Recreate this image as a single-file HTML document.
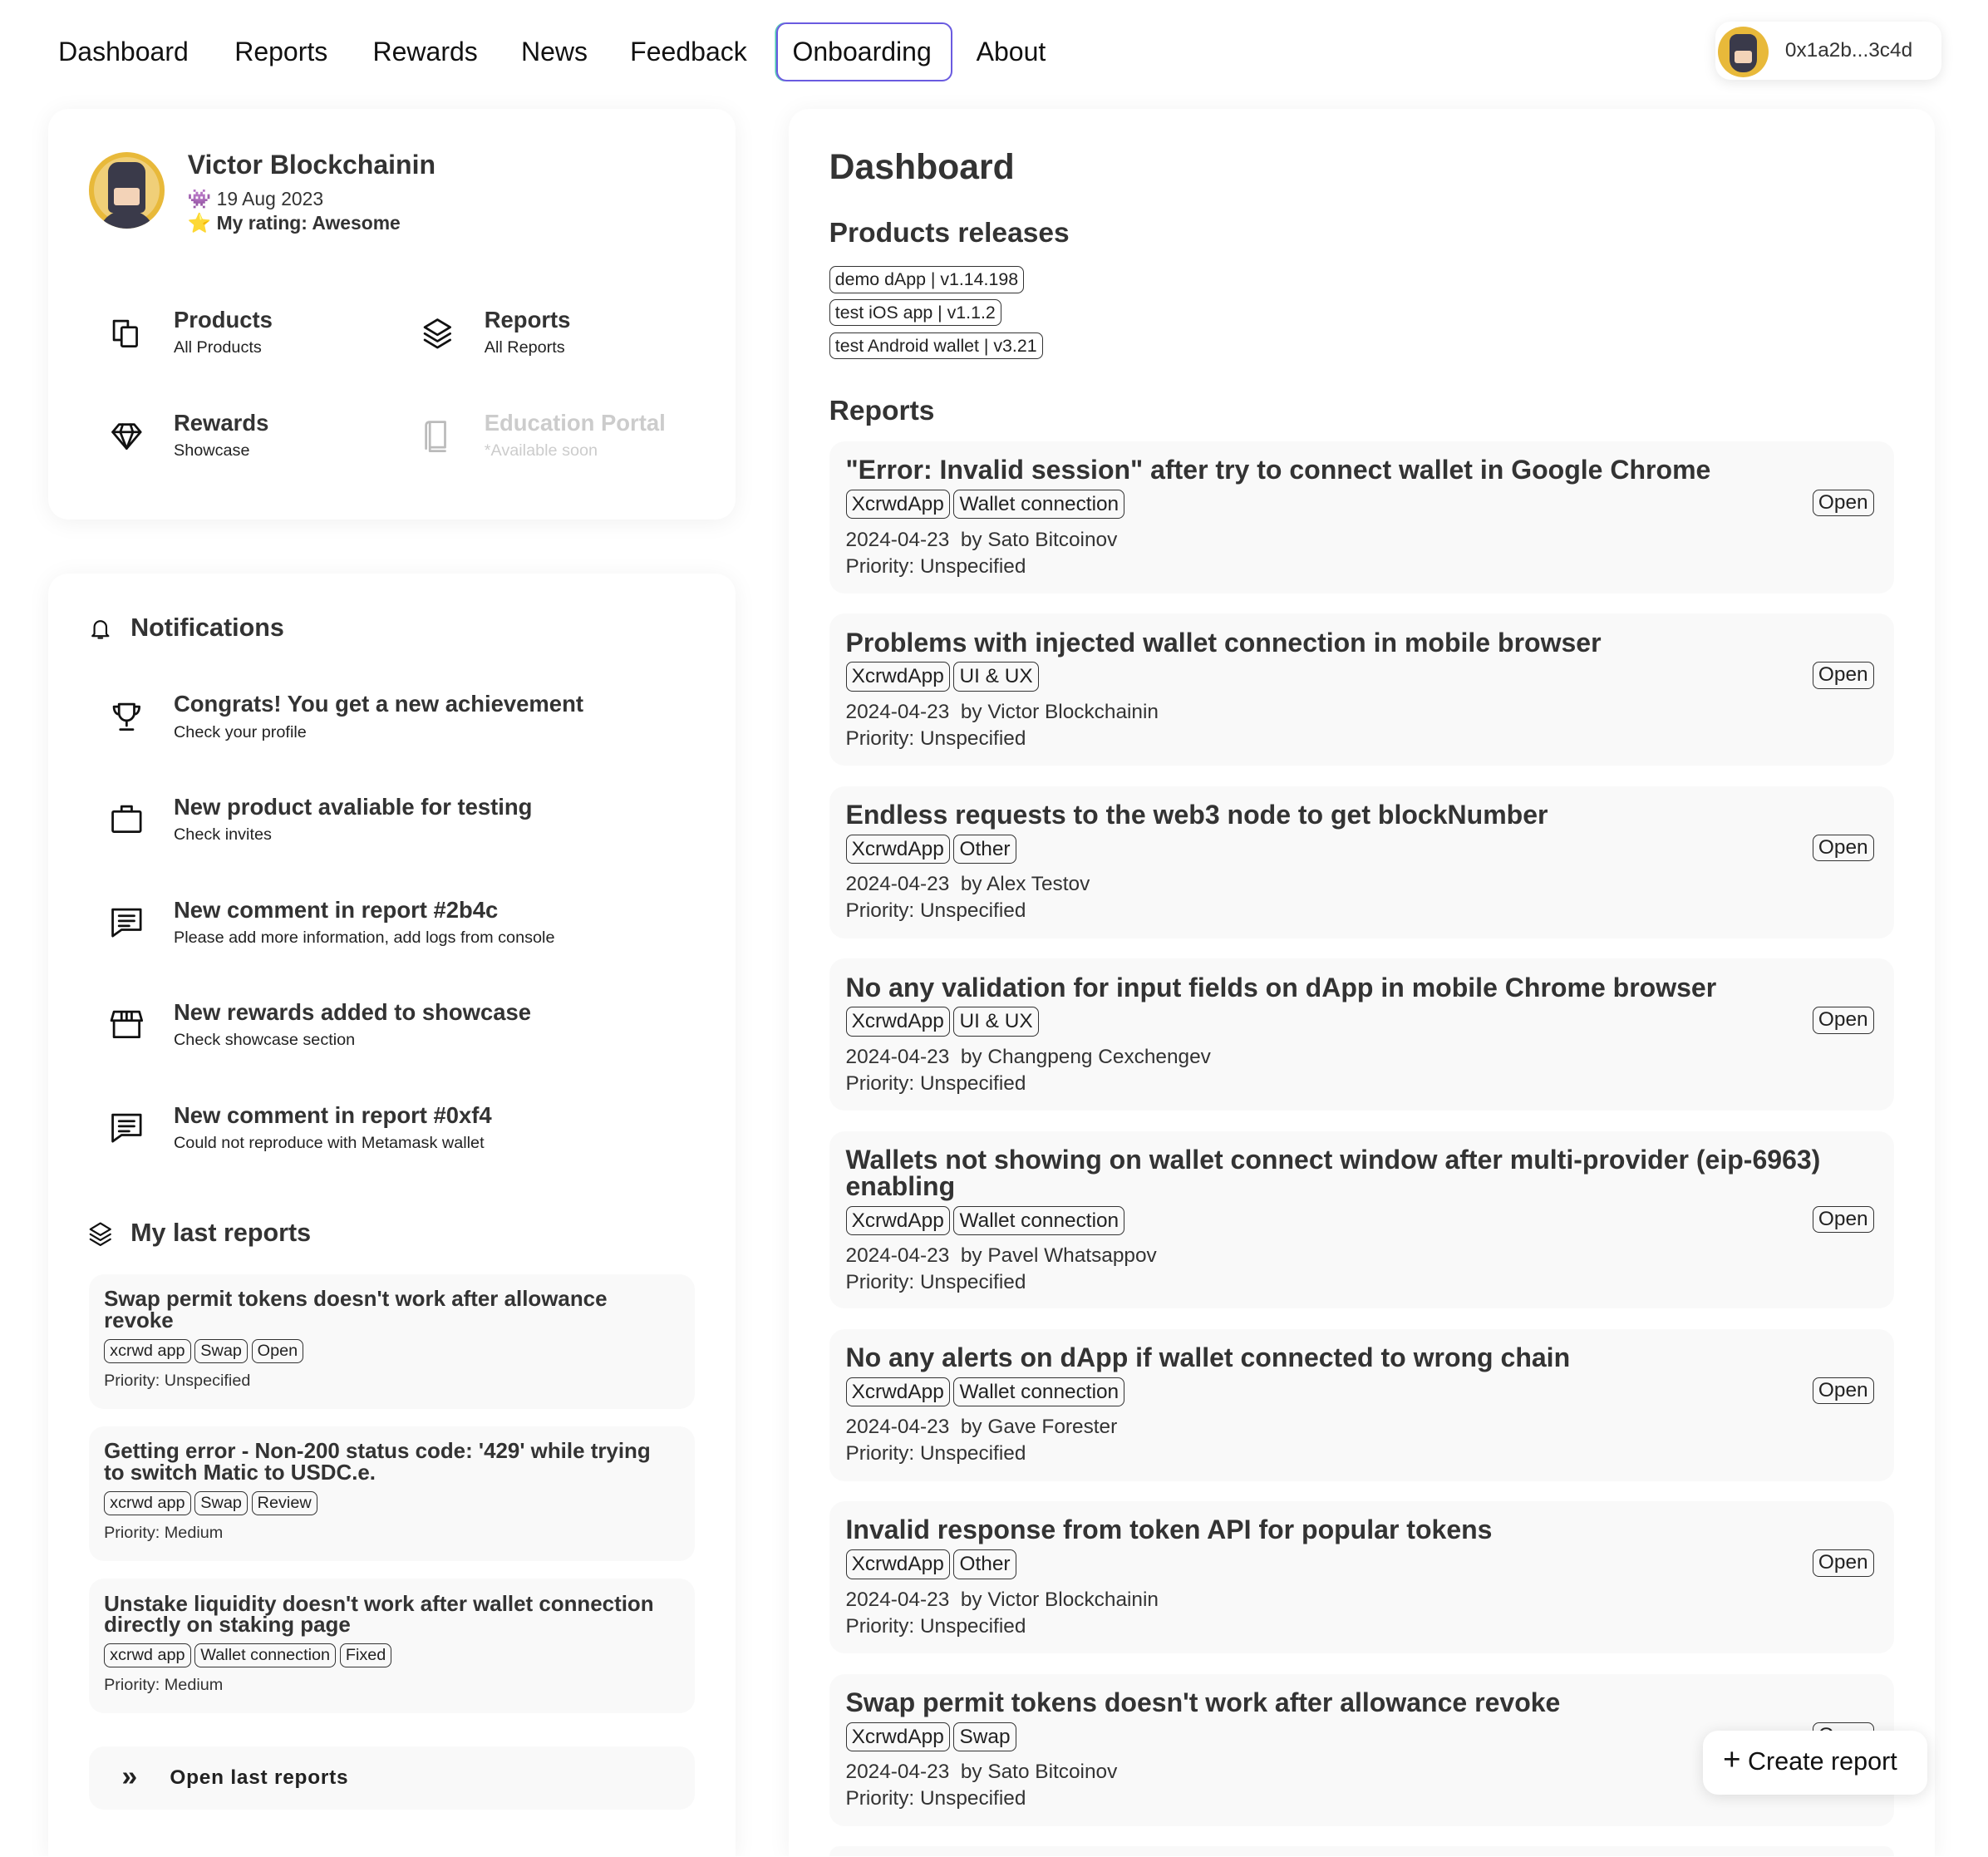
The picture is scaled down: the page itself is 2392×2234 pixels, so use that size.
<!DOCTYPE html>
<html><head><meta charset="utf-8">
<style>
html{zoom:1.5255}
*{box-sizing:border-box;margin:0;padding:0}
html,body{overflow:hidden}
body{width:1568px;height:1464px;background:#fff;font-family:"Liberation Sans",sans-serif;color:#222;}
#w{position:relative;width:1568px;height:1464px;overflow:hidden}
.a{position:absolute}
.nav{font-size:21px;color:#111;top:29px}
.card{position:absolute;background:#fff;border-radius:16px;box-shadow:0 2px 18px rgba(0,0,0,.06)}
.t{font-weight:bold;color:#333}
.ic{position:absolute;width:28px;height:28px}
.ic svg{width:28px;height:28px;fill:none;stroke:#111;stroke-width:1.8;stroke-linejoin:round;stroke-linecap:round}
.tag{display:inline-block;border:1px solid #333;border-radius:5px;padding:0 4px;margin-right:3px;line-height:20px}
.mini{position:absolute;left:70px;width:478px;background:#f9f9f9;border-radius:12px;padding:12px 24px 12px 12px}
.mini h4{font-size:17px;line-height:17px;color:#333}
.mini .tags{margin-top:5px;font-size:13px}
.mini .tags .tag{line-height:18px}
.mini p{font-size:13px;margin-top:6px;color:#333}
.rc{position:absolute;left:654px;width:840px;background:#f9f9f9;border-radius:12px;padding:12px 13px}
.rc h3{font-size:21px;line-height:21px;color:#333}
.rc .tags{margin-top:5px;font-size:16px}
.rc .tags .tag{line-height:22px}
.rc .open{position:absolute;right:13px;font-size:16px}
.rc p{font-size:16px;color:#333;line-height:21px}
</style></head><body><div id="w">
<div class="a nav" style="left:46px">Dashboard</div>
<div class="a nav" style="left:185px">Reports</div>
<div class="a nav" style="left:294px">Rewards</div>
<div class="a nav" style="left:411px">News</div>
<div class="a nav" style="left:497px">Feedback</div>
<div class="a" style="left:612px;top:18px;width:139px;height:46px;border-radius:8px;border:1.5px solid #6a5be0;box-shadow:-1px 0 0 #4cc9b0"></div>
<div class="a nav" style="left:625px">Onboarding</div>
<div class="a nav" style="left:770px">About</div>
<div class="a" style="left:1353px;top:17px;width:178px;height:46px;border-radius:12px;box-shadow:0 2px 10px rgba(0,0,0,.1);background:#fff"></div>
<div class="a" style="left:1355px;top:21px;width:40px;height:40px;border-radius:50%;background:#e8b93a;overflow:hidden"><div style="position:absolute;left:9px;top:6px;width:22px;height:30px;background:#3a3a4a;border-radius:6px 6px 10px 10px"></div><div style="position:absolute;left:13px;top:19px;width:14px;height:10px;background:#f3d3b8;border-radius:2px"></div></div>
<div class="a" style="left:1408px;top:31px;font-size:16px;color:#333">0x1a2b...3c4d</div>

<div class="card" style="left:38px;top:86px;width:542px;height:324px"></div>
<div class="a" style="left:70px;top:120px;width:60px;height:60px;border-radius:50%;background:#e8b93a;overflow:hidden"><div style="position:absolute;left:4px;top:4px;width:52px;height:52px;border-radius:50%;background:#f0cf78"></div><div style="position:absolute;left:15px;top:8px;width:30px;height:40px;background:#3a3a4a;border-radius:8px 8px 4px 4px"></div><div style="position:absolute;left:20px;top:28px;width:20px;height:14px;background:#f3d3b8;border-radius:2px"></div><div style="position:absolute;left:8px;top:46px;width:44px;height:20px;background:#3a3a4a;border-radius:20px 20px 0 0"></div></div>
<div class="a t" style="left:148px;top:118px;font-size:21px">Victor Blockchainin</div>
<div class="a" style="left:148px;top:148px;font-size:15px;color:#333"><span style="color:#6b4fb8">👾</span> 19 Aug 2023</div>
<div class="a" style="left:148px;top:167px;font-size:15px;color:#333;font-weight:bold">⭐ My rating: Awesome</div>

<div class="ic" style="left:86px;top:249px"><svg viewBox="0 0 28 28"><path d="M9 19H4V4h11v4"/><rect x="10" y="9" width="12" height="15" rx="1"/></svg></div>
<div class="a t" style="left:137px;top:242px;font-size:18px">Products</div>
<div class="a" style="left:137px;top:267px;font-size:13px">All Products</div>
<div class="ic" style="left:331px;top:249px"><svg viewBox="0 0 28 28"><path d="M14 3l10 6-10 6-10-6z"/><path d="M4 14l10 6 10-6"/><path d="M4 19l10 6 10-6"/></svg></div>
<div class="a t" style="left:382px;top:242px;font-size:18px">Reports</div>
<div class="a" style="left:382px;top:267px;font-size:13px">All Reports</div>
<div class="ic" style="left:86px;top:330px"><svg viewBox="0 0 28 28"><path d="M8 5h12l5 6-11 13L3 11z"/><path d="M3 11h22M11 5l-2 6 5 13 5-13-2-6"/></svg></div>
<div class="a t" style="left:137px;top:323px;font-size:18px">Rewards</div>
<div class="a" style="left:137px;top:348px;font-size:13px">Showcase</div>
<div class="ic" style="left:331px;top:330px"><svg viewBox="0 0 28 28" style="stroke:#bbb"><path d="M8 3h12v20H8zM8 23v3h12M8 3c-2 0-3 1-3 3v18"/></svg></div>
<div class="a t" style="left:382px;top:323px;font-size:18px;color:#ccc">Education Portal</div>
<div class="a" style="left:382px;top:348px;font-size:13px;color:#ccc">*Available soon</div>

<div class="card" style="left:38px;top:452px;width:542px;height:1012px;border-radius:16px 16px 0 0"></div>
<div class="ic" style="left:68px;top:485px;width:22px;height:22px"><svg viewBox="0 0 28 28" style="width:22px;height:22px"><path d="M8 19V12a6 6 0 0112 0v7l2 2H6zM12 23h4"/></svg></div>
<div class="a t" style="left:103px;top:484px;font-size:20px">Notifications</div>

<div class="ic" style="left:86px;top:551px"><svg viewBox="0 0 28 28"><path d="M8 4h12v7a6 6 0 01-12 0zM8 6H4c0 4 2 6 4 6M20 6h4c0 4-2 6-4 6M14 17v4M9 24h10"/></svg></div>
<div class="a t" style="left:137px;top:545px;font-size:18px">Congrats! You get a new achievement</div>
<div class="a" style="left:137px;top:570px;font-size:13px">Check your profile</div>
<div class="ic" style="left:86px;top:632px"><svg viewBox="0 0 28 28"><rect x="3" y="8" width="22" height="16" rx="1"/><path d="M10 8V4h8v4"/></svg></div>
<div class="a t" style="left:137px;top:626px;font-size:18px">New product avaliable for testing</div>
<div class="a" style="left:137px;top:651px;font-size:13px">Check invites</div>
<div class="ic" style="left:86px;top:713px"><svg viewBox="0 0 28 28"><path d="M3 4h22v16H10l-7 5zM8 9h12M8 13h12M8 17h8"/></svg></div>
<div class="a t" style="left:137px;top:707px;font-size:18px">New comment in report #2b4c</div>
<div class="a" style="left:137px;top:732px;font-size:13px">Please add more information, add logs from console</div>
<div class="ic" style="left:86px;top:794px"><svg viewBox="0 0 28 28"><path d="M4 4h20l2 7H2zM4 11v13h20V11M10 4v7M18 4v7M14 4v7"/></svg></div>
<div class="a t" style="left:137px;top:788px;font-size:18px">New rewards added to showcase</div>
<div class="a" style="left:137px;top:813px;font-size:13px">Check showcase section</div>
<div class="ic" style="left:86px;top:875px"><svg viewBox="0 0 28 28"><path d="M3 4h22v16H10l-7 5zM8 9h12M8 13h12M8 17h8"/></svg></div>
<div class="a t" style="left:137px;top:869px;font-size:18px">New comment in report #0xf4</div>
<div class="a" style="left:137px;top:894px;font-size:13px">Could not reproduce with Metamask wallet</div>

<div class="ic" style="left:68px;top:962px;width:22px;height:22px"><svg viewBox="0 0 28 28" style="width:22px;height:22px"><path d="M14 3l10 6-10 6-10-6z"/><path d="M4 14l10 6 10-6"/><path d="M4 19l10 6 10-6"/></svg></div>
<div class="a t" style="left:103px;top:961px;font-size:20px">My last reports</div>

<div class="mini" style="top:1005px;height:106px"><h4>Swap permit tokens doesn't work after allowance revoke</h4><div class="tags"><span class="tag">xcrwd app</span><span class="tag">Swap</span><span class="tag">Open</span></div><p>Priority: Unspecified</p></div>
<div class="mini" style="top:1125px;height:106px"><h4>Getting error - Non-200 status code: '429' while trying to switch Matic to USDC.e.</h4><div class="tags"><span class="tag">xcrwd app</span><span class="tag">Swap</span><span class="tag">Review</span></div><p>Priority: Medium</p></div>
<div class="mini" style="top:1245px;height:106px"><h4>Unstake liquidity doesn't work after wallet connection directly on staking page</h4><div class="tags"><span class="tag">xcrwd app</span><span class="tag">Wallet connection</span><span class="tag">Fixed</span></div><p>Priority: Medium</p></div>
<div class="mini" style="top:1377px;height:50px;padding:12px 26px"><span style="font-size:22px;font-weight:bold">»</span><span style="position:absolute;left:64px;top:16px;font-size:16px;font-weight:bold;letter-spacing:.5px">Open last reports</span></div>

<div class="card" style="left:622px;top:86px;width:904px;height:1378px;border-radius:16px 16px 0 0"></div>
<div class="a t" style="left:654px;top:116px;font-size:28px">Dashboard</div>
<div class="a t" style="left:654px;top:172px;font-size:22px">Products releases</div>
<div class="a" style="left:654px;top:208px;font-size:14px;line-height:26px"><span class="tag">demo dApp | v1.14.198</span><br><span class="tag">test iOS app | v1.1.2</span><br><span class="tag">test Android wallet | v3.21</span></div>
<div class="a t" style="left:654px;top:312px;font-size:22px">Reports</div>

<div class="rc" style="top:348px;height:120px"><h3>"Error: Invalid session" after try to connect wallet in Google Chrome</h3><div class="tags"><span class="tag">XcrwdApp</span><span class="tag">Wallet connection</span></div><span class="tag open" style="top:38px">Open</span><p style="margin-top:6px">2024-04-23 &nbsp;by Sato Bitcoinov</p><p>Priority: Unspecified</p></div>
<div class="rc" style="top:484px;height:120px"><h3>Problems with injected wallet connection in mobile browser</h3><div class="tags"><span class="tag">XcrwdApp</span><span class="tag">UI &amp; UX</span></div><span class="tag open" style="top:38px">Open</span><p style="margin-top:6px">2024-04-23 &nbsp;by Victor Blockchainin</p><p>Priority: Unspecified</p></div>
<div class="rc" style="top:620px;height:120px"><h3>Endless requests to the web3 node to get blockNumber</h3><div class="tags"><span class="tag">XcrwdApp</span><span class="tag">Other</span></div><span class="tag open" style="top:38px">Open</span><p style="margin-top:6px">2024-04-23 &nbsp;by Alex Testov</p><p>Priority: Unspecified</p></div>
<div class="rc" style="top:756px;height:120px"><h3>No any validation for input fields on dApp in mobile Chrome browser</h3><div class="tags"><span class="tag">XcrwdApp</span><span class="tag">UI &amp; UX</span></div><span class="tag open" style="top:38px">Open</span><p style="margin-top:6px">2024-04-23 &nbsp;by Changpeng Cexchengev</p><p>Priority: Unspecified</p></div>
<div class="rc" style="top:892px;height:140px"><h3>Wallets not showing on wallet connect window after multi-provider (eip-6963) enabling</h3><div class="tags"><span class="tag">XcrwdApp</span><span class="tag">Wallet connection</span></div><span class="tag open" style="top:59px">Open</span><p style="margin-top:6px">2024-04-23 &nbsp;by Pavel Whatsappov</p><p>Priority: Unspecified</p></div>
<div class="rc" style="top:1048px;height:120px"><h3>No any alerts on dApp if wallet connected to wrong chain</h3><div class="tags"><span class="tag">XcrwdApp</span><span class="tag">Wallet connection</span></div><span class="tag open" style="top:38px">Open</span><p style="margin-top:6px">2024-04-23 &nbsp;by Gave Forester</p><p>Priority: Unspecified</p></div>
<div class="rc" style="top:1184px;height:120px"><h3>Invalid response from token API for popular tokens</h3><div class="tags"><span class="tag">XcrwdApp</span><span class="tag">Other</span></div><span class="tag open" style="top:38px">Open</span><p style="margin-top:6px">2024-04-23 &nbsp;by Victor Blockchainin</p><p>Priority: Unspecified</p></div>
<div class="rc" style="top:1320px;height:120px"><h3>Swap permit tokens doesn't work after allowance revoke</h3><div class="tags"><span class="tag">XcrwdApp</span><span class="tag">Swap</span></div><span class="tag open" style="top:38px">Open</span><p style="margin-top:6px">2024-04-23 &nbsp;by Sato Bitcoinov</p><p>Priority: Unspecified</p></div>
<div class="rc" style="top:1456px;height:8px;padding:0;border-radius:12px 12px 0 0"></div>

<div class="a" style="left:1343px;top:1365px;width:177px;height:50px;background:#fff;border-radius:12px;box-shadow:0 2px 12px rgba(0,0,0,.12);font-size:20px;padding:13px 0 0 16px;color:#111"><span style="font-size:24px;line-height:20px">+</span> Create report</div>
</div></body></html>
